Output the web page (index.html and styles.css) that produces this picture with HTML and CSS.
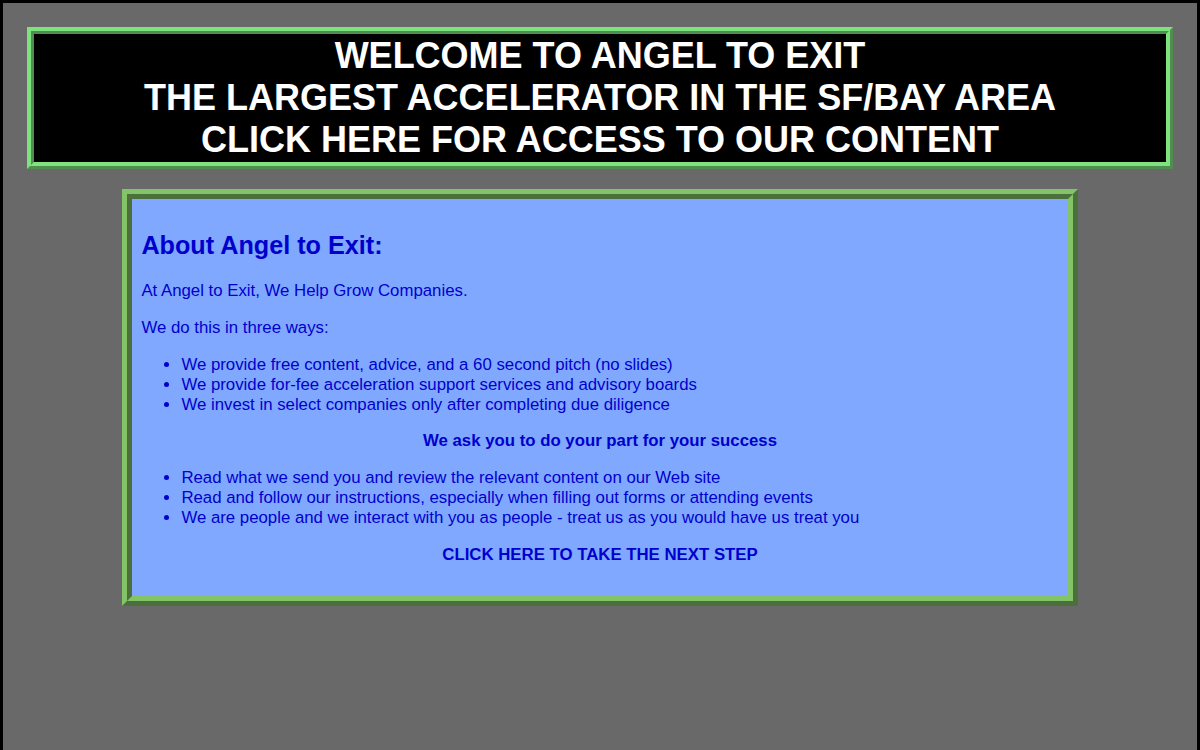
FILE: index.html
```html
<!DOCTYPE html>
<html>
<head>
<meta charset="utf-8">
<link rel="stylesheet" href="styles.css">
</head>
<body>
<div class="page">
  <div class="banner">
    <a class="banner-link" href="#">WELCOME TO ANGEL TO EXIT<br>THE LARGEST ACCELERATOR IN THE SF/BAY AREA<br>CLICK HERE FOR ACCESS TO OUR CONTENT</a>
  </div>
  <div class="content">
    <h2 class="title">About Angel to Exit:</h2>
    <p class="para">At Angel to Exit, We Help Grow Companies.</p>
    <p class="para">We do this in three ways:</p>
    <ul class="list">
      <li>We provide free content, advice, and a 60 second pitch (no slides)</li>
      <li>We provide for-fee acceleration support services and advisory boards</li>
      <li>We invest in select companies only after completing due diligence</li>
    </ul>
    <p class="para center bold">We ask you to do your part for your success</p>
    <ul class="list">
      <li>Read what we send you and review the relevant content on our Web site</li>
      <li>Read and follow our instructions, especially when filling out forms or attending events</li>
      <li>We are people and we interact with you as people - treat us as you would have us treat you</li>
    </ul>
    <p class="para center bold"><a class="next" href="#">CLICK HERE TO TAKE THE NEXT STEP</a></p>
  </div>
</div>
</body>
</html>
```

FILE: styles.css
```css
html, body {
  margin: 0;
  padding: 0;
  height: 100%;
  background: #000;
}
body {
  font-family: "Liberation Sans", Arial, sans-serif;
  box-sizing: border-box;
  padding: 3px 3px 0 3px;
}
.page {
  background: #696969;
  min-height: 100%;
  padding: 24px 0 40px 0;
  box-sizing: border-box;
}
.banner {
  background: #000;
  border: 7px ridge #7ee27e;
  text-align: center;
  margin: 0 24px;
  padding: 1px 0;
}
.banner-link {
  display: block;
  color: #fff;
  text-decoration: none;
  font-weight: bold;
  font-size: 36px;
  line-height: 42px;
}
.content {
  width: 80%;
  margin: 20px auto 0 auto;
  box-sizing: border-box;
  background: #80a8ff;
  border: 10px ridge #84c468;
  padding: 11px 9px 14px 9px;
  color: #0000cd;
  font-size: 16.8px;
  line-height: 20px;
}
.title {
  font-size: 25.2px;
  line-height: 29px;
  margin: 21px 0;
}
.para {
  margin: 16.8px 0;
}
.list {
  margin: 16.8px 0;
  padding-left: 40px;
}
.center {
  text-align: center;
}
.bold {
  font-weight: bold;
}
.next {
  color: #0000cd;
  text-decoration: none;
}
```
